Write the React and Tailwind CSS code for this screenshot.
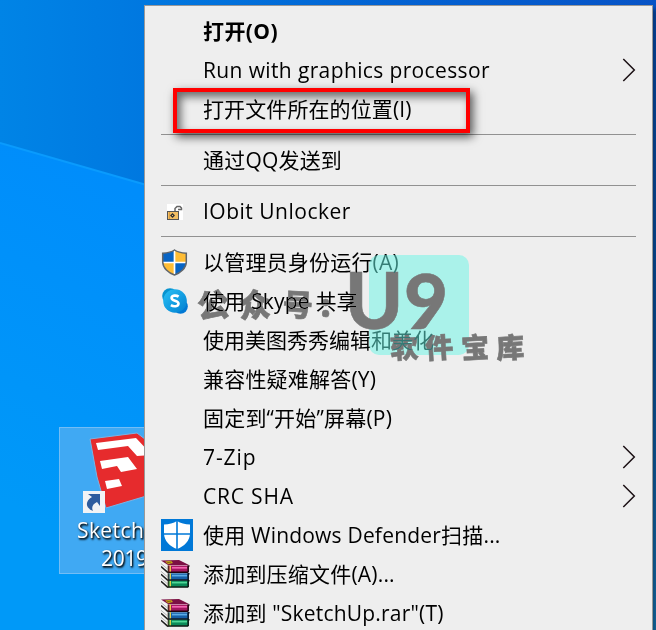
const T = ({ children, cls = 'tracking-[0.2px]' }) => (
  <span className={"whitespace-pre font-['Open_Sans','Noto_Sans_CJK_SC',sans-serif] text-[21px] leading-[39px] text-black " + cls}>{children}</span>
);

const Chevron = () => (
  <svg className="relative -top-px ml-auto mr-[16px] h-[24px] w-[14px] shrink-0" viewBox="0 0 14 24" fill="none" stroke="#1b1014" strokeWidth="1.5">
    <path d="M1.3 1 L12.300 12 L1.3 23" />
  </svg>
);

const Unlocker = () => (
  <svg className="size-4" viewBox="0 0 16 16">
    <rect width="16" height="16" fill="#fff" />
    <path d="M8 7V4.500L10 2.500H13L14.500 4V5.500H11" fill="none" stroke="#666" strokeWidth="1.500" />
    <rect x=".5" y="7.500" width="11" height="8" fill="#f4bf62" stroke="#555" />
    <path d="M2.500 8v7" stroke="#d99d43" />
    <path d="M5.500 9l2.500 2.500-2.500 2.500L3 11.500z" fill="#333" />
    <rect x="5" y="11" width="1" height="1" fill="#f4bf62" />
  </svg>
);

const Shield = () => (
  <svg className="h-[27px] w-[27px]" viewBox="0 0 26 27">
    <clipPath id="shield"><path d="M13 1C9.500 3.500 5 4 1.200 4.200V13C1.200 19 7 24 13 26C19 24 24.800 19 24.800 13V4.200C21 4 16.500 3.500 13 1Z" /></clipPath>
    <g clipPath="url(#shield)">
      <path d="M0 0H13V14H0z" fill="#0864c4" />
      <path d="M13 0H26V14H13z" fill="#ffbd35" />
      <path d="M0 14H13V27H0z" fill="#ffbd35" />
      <path d="M13 14H26V27H13z" fill="#0864c4" />
      <path d="M13 0V27M0 13.500H26" stroke="#fff" strokeWidth="1.700" />
    </g>
    <path d="M13 1C9.500 3.500 5 4 1.200 4.200V13C1.200 19 7 24 13 26C19 24 24.800 19 24.800 13V4.200C21 4 16.500 3.500 13 1Z" fill="none" stroke="#61666c" strokeWidth="1.500" />
  </svg>
);

const Skype = () => (
  <svg className="relative -top-px left-px size-[26px]" viewBox="0 0 26 26">
    <defs>
      <linearGradient id="sk" x1="0" y1="0" x2="1" y2="1"><stop offset="0" stopColor="#28c0f5" /><stop offset="1" stopColor="#007fd0" /></linearGradient>
    </defs>
    <circle cx="8" cy="8" r="7.800" fill="#0793cf" />
    <circle cx="18.500" cy="18.500" r="7.300" fill="#0078d4" />
    <circle cx="13" cy="13" r="11.800" fill="url(#sk)" />
    <path d="M16.600 8.600C14.300 7 9.600 7.200 9.600 10C9.600 13.200 16.500 12.200 16.500 15.600C16.500 18.800 11.500 18.800 8.900 17.200" fill="none" stroke="#fff" strokeWidth="2.600" />
  </svg>
);

const Defender = () => (
  <svg className="relative -top-px size-8" viewBox="0 0 32 32">
    <rect width="32" height="32" fill="#0078d7" />
    <path d="M16 2C12.500 4.500 8 5.300 3 5.500V14C3 22 9 27.500 16 30C23 27.500 29 22 29 14V5.500C24 5.300 19.500 4.500 16 2Z" fill="#fff" />
    <path d="M16 1V31M2 15H30" stroke="#0078d7" strokeWidth="1.600" />
  </svg>
);

const Book = ({ y, c, hi, dark }) => (
  <g transform={'translate(0 ' + y + ')'}>
    <path d="M0 1L7 6V12.500L0 6.500Z" fill="#f4f4f4" />
    <path d="M0 6L7 12.200" stroke="#1c1c1c" strokeWidth="1.600" />
    <path d="M0 3L6.500 8.500" stroke="#999" strokeWidth=".7" />
    <path d="M7 5H27V11.500H7Z" fill={c} />
    <path d="M11 7.300H26" stroke={hi} strokeWidth="1.700" />
    <path d="M7 11.700H27M26.500 5.500H28.500M27.200 5V12" stroke={dark} strokeWidth="1.500" />
    <path d="M7.200 5V12" stroke="#3a2a10" strokeWidth="1" />
    <path d="M9.300 5V11" stroke="#e7ce42" strokeWidth="1.400" />
  </g>
);

const Rar = () => (
  <svg className="relative -top-px h-[28px] w-[29px]" viewBox="0 0 29 28">
    <Book y={15.300} c="#0a8a58" hi="#4fd797" dark="#04170f" />
    <Book y={8.300} c="#1660a8" hi="#5dace6" dark="#04101f" />
    <Book y={0.500} c="#a3175f" hi="#f263b0" dark="#20040f" />
    <path d="M0 .5L18 0L28 5H7Z" fill="#7c1044" />
    <path d="M4 1.500L10 .8L12 3L7 4.200Z" fill="#c3a51b" />
    <path d="M6 2.800L10 2" stroke="#6b4a10" strokeWidth=".7" />
  </svg>
);

const Row = ({ icon, children, arrow }) => (
  <div className="flex h-[39px] shrink-0 items-center">
    <div className="flex w-[58px] shrink-0 items-center pl-4">{icon}</div>
    {children}
    {arrow && <Chevron />}
  </div>
);

const Sep = () => (
  <div className="h-3 shrink-0 pl-4 pr-[16px] pt-[5px]"><div className="h-px bg-[#919191]" /></div>
);

const Wallpaper = () => (
  <svg className="absolute inset-0 h-[630px] w-[656px]" viewBox="0 0 656 630">
    <defs>
      <linearGradient id="up" x1="0" y1="0" x2="1" y2="0"><stop offset="0" stopColor="#0084e6" /><stop offset=".22" stopColor="#0078e0" /><stop offset=".6" stopColor="#0362d2" /><stop offset="1" stopColor="#0753c6" /></linearGradient>
      <linearGradient id="low" gradientUnits="userSpaceOnUse" x1="0" y1="500" x2="150" y2="200"><stop offset="0" stopColor="#0099f8" /><stop offset="1" stopColor="#008dfb" /></linearGradient>
      <linearGradient id="edge" x1="0" y1="0" x2="0" y2="1"><stop offset="0" stopColor="#0753c0" /><stop offset=".55" stopColor="#0a5aae" /><stop offset="1" stopColor="#1a7fc4" /></linearGradient>
    </defs>
    <rect width="656" height="630" fill="url(#up)" />
    <path d="M0 143L150 186V630H0Z" fill="url(#low)" />
    <path d="M0 143L150 186" stroke="#0a9bfd" strokeWidth="2" />
    <rect x="652" y="10" width="4" height="620" fill="url(#edge)" />
  </svg>
);

const SketchUp = () => (
  <svg className="absolute left-[20px] top-[4px] h-[84px] w-[100px]" viewBox="80 432 100 84">
    <path d="M90 439L137 433L180 466V486L106 508L97 477Z" fill="#e62b2d" stroke="#7ab4e5" />
    <path d="M96 443L136 438L152 455L137 456L128 446L98 450Z" fill="#fff" />
    <path d="M100 461L128 457L137 469L121 472L117 466L102 469Z" fill="#fff" />
    <path d="M105 481L119 479L122 486L107 489Z" fill="#fff" />
    <rect x="83" y="491" width="22" height="22" fill="#f2f3f5" />
    <path d="M88 494H100V506L97 502C93 504 91 507 93 511C85 508 85 501 92 497Z" fill="#2e5c9e" />
  </svg>
);

const wm = "absolute whitespace-nowrap leading-none text-[#777777] font-black [-webkit-text-stroke:0.6px_#777777]";
const han = " font-['Noto_Sans_CJK_SC',sans-serif]";
const lat = " font-['Lato',sans-serif]";

export default function App() {
  return (
    <div className="relative h-[630px] w-[656px] overflow-hidden">
      <Wallpaper />
      <div className="absolute left-[59px] top-[427px] h-[147px] w-[148px] border border-[#73bdf5] bg-[#40a9f3]">
        <SketchUp />
        <div className="absolute left-[17px] top-[88px] w-[120px] whitespace-nowrap font-['Open_Sans',sans-serif] text-[21px] leading-[28px] tracking-[0.4px] text-white [text-shadow:1px_1px_2px_#000,1px_2px_2px_rgba(0,0,0,0.6)]">
          <div>SketchUp</div>
          <div className="pl-[24px] tracking-[-0.3px]">2019</div>
        </div>
      </div>
      <div className="absolute left-[144px] top-[5px] flex h-[640px] w-[509px] flex-col border border-[#999] bg-[#eeeeee] pt-[6px] shadow-[4px_4px_4px_rgba(0,0,0,0.35)]">
        <Row><T cls="font-bold tracking-[0.4px]">打开(O)</T></Row>
        <Row arrow><T cls="tracking-[0.37px]">Run with graphics processor</T></Row>
        <Row><T cls="tracking-[0.1px]">打开文件所在的位置(I)</T></Row>
        <Sep />
        <Row><T>通过QQ发送到</T></Row>
        <Sep />
        <Row icon={<div className="pl-1.5"><Unlocker /></div>}><T cls="tracking-[0.5px]">IObit Unlocker</T></Row>
        <Sep />
        <Row icon={<Shield />}><T>以管理员身份运行(A)</T></Row>
        <Row icon={<Skype />}><T>使用 Skype 共享</T></Row>
        <Row><T cls="">使用美图秀秀编辑和美化</T></Row>
        <Row><T>兼容性疑难解答(Y)</T></Row>
        <Row><T>固定到“开始”屏幕(P)</T></Row>
        <Row arrow><T cls="tracking-[0.9px]">7-Zip</T></Row>
        <Row arrow><T cls="tracking-[0.8px]">CRC SHA</T></Row>
        <Row icon={<Defender />}><T>使用 Windows Defender扫描...</T></Row>
        <Row icon={<Rar />}><T>添加到压缩文件(A)...</T></Row>
        <Row icon={<Rar />}><T>添加到 "SketchUp.rar"(T)</T></Row>
      </div>
      <div className="absolute left-[173px] top-[88px] h-[45px] w-[297px] border-4 border-[#ff0000] shadow-[3px_4px_9px_rgba(0,0,0,0.65),inset_4px_5px_9px_rgba(0,0,0,0.55)]" />
      <div className="absolute left-[369px] top-[255px] size-[100px] rounded-[10px] bg-[#68f5e6]/51" />
      <div className="absolute inset-0 mix-blend-darken">
        <span className={wm + han + ' left-[197px] top-[287px] -rotate-6 text-[32px]'}>公</span>
        <span className={wm + han + ' left-[239px] top-[287px] -rotate-3 text-[32px]'}>众</span>
        <span className={wm + han + ' left-[283px] top-[288px] rotate-3 text-[30px]'}>号</span>
        <span className={wm + han + ' left-[320px] top-[287px] text-[32px]'}>:</span>
        <span className={wm + lat + ' left-[345px] top-[260px] text-[78px]'}>U</span>
        <span className={wm + lat + ' left-[404px] top-[262px] text-[76px]'}>9</span>
        <span className={wm + han + ' left-[390px] top-[332px] -rotate-3 text-[28px]'}>软</span>
        <span className={wm + han + ' left-[425px] top-[332px] -rotate-3 text-[28px]'}>件</span>
        <span className={wm + han + ' left-[461px] top-[332px] -rotate-3 text-[28px]'}>宝</span>
        <span className={wm + han + ' left-[496px] top-[332px] -rotate-3 text-[28px]'}>库</span>
      </div>
    </div>
  );
}
